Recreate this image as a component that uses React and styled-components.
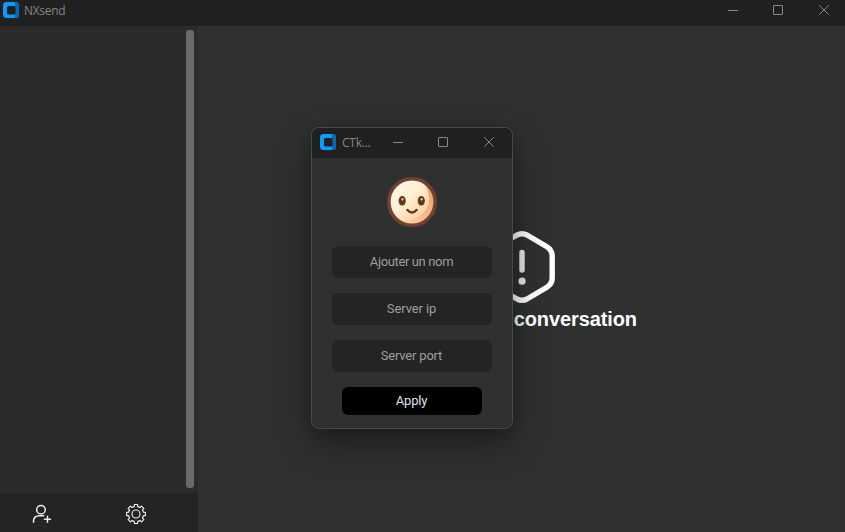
import React from "react";
import styled, { createGlobalStyle } from "styled-components";

const GlobalStyle = createGlobalStyle`
  * { box-sizing: border-box; }
  body { margin: 0; background: #2f3130; overflow: hidden; }
`;

const Window = styled.div`
  position: relative;
  display: flex;
  flex-direction: column;
  width: 845px;
  height: 532px;
  background: #2f3130;
  font-family: Roboto, "Liberation Sans", sans-serif;
`;

const TitleBar = styled.header`
  display: flex;
  flex: none;
  align-items: flex-start;
  height: ${(p) => (p.$dialog ? 30 : 26)}px;
  padding: ${(p) => (p.$dialog ? "6px 0 0 8px" : "2px 0 0 3px")};
  background: #202020;
`;

const Title = styled.span`
  flex: 1;
  margin-left: ${(p) => (p.$dialog ? 6 : 5)}px;
  color: #868686;
  font: 12px/17px "Open Sans", "Noto Sans", sans-serif;
  letter-spacing: ${(p) => (p.$dialog ? -0.25 : -0.3)}px;
  white-space: nowrap;
`;

const Controls = styled.div`
  display: flex;
  gap: 34px;
  padding: ${(p) => (p.$dialog ? "2px 17px 0 0" : "2px 15px 0 0")};
`;

const ControlIcon = styled.svg`
  display: block;
  width: 12px;
  height: 12px;
  overflow: visible;
  fill: none;
  stroke: #8a8a8a;
`;

const Logo = styled.svg`
  display: block;
  flex: none;
  width: 16px;
  height: 16px;
`;

const Content = styled.div`
  display: flex;
  flex: 1;
  min-height: 0;
`;

const Sidebar = styled.aside`
  display: flex;
  flex-direction: column;
  width: 198px;
  background: #2b2b2b;
`;

const ListArea = styled.div`
  display: flex;
  flex: 1;
  justify-content: flex-end;
  padding: 4px 4px 5px 0;
`;

const ScrollThumb = styled.div`
  width: 8px;
  border-radius: 3px;
  background: #696969;
`;

const SidebarFooter = styled.footer`
  display: flex;
  height: 39px;
  padding: 10px 0 0 30px;
  gap: 73px;
  background: #242424;
`;

const ToolIcon = styled.svg`
  display: block;
  width: 22px;
  height: 22px;
  fill: none;
  stroke: #ededed;
  stroke-linecap: round;
  stroke-linejoin: round;
`;

const Main = styled.main`
  display: flex;
  flex: 1;
  flex-direction: column;
  align-items: center;
  padding-top: 203px;
`;

const AlertIcon = styled.svg`
  display: block;
  width: 76px;
  height: 76px;
`;

const EmptyMessage = styled.div`
  margin-top: 2px;
  color: #fff;
  font: bold 20px/24px "Liberation Sans", Arial, sans-serif;
  letter-spacing: -0.1px;
  padding-left: 2px;
`;

const Dialog = styled.section`
  position: absolute;
  top: 127px;
  left: 311px;
  display: flex;
  flex-direction: column;
  width: 202px;
  height: 302px;
  overflow: hidden;
  border: 1px solid #484a49;
  border-radius: 8px;
  background: #2f3130;
  box-shadow: 0 14px 34px rgba(0, 0, 0, 0.42), 0 1px 12px rgba(0, 0, 0, 0.12);
`;

const Form = styled.form`
  display: flex;
  flex-direction: column;
  align-items: center;
  gap: 15px;
  padding-top: 19px;
`;

const Avatar = styled.svg`
  display: block;
  width: 50px;
  height: 50px;
  margin-bottom: 4px;
`;

const Field = styled.input`
  width: 160px;
  height: 32px;
  padding: 0 1px 1px 0;
  border: 0;
  border-radius: 6px;
  background: #242424;
  font: 13px Roboto, sans-serif;
  letter-spacing: ${(p) => p.$tracking}px;
  text-align: center;
  &::placeholder { color: #9e9e9e; opacity: 1; }
`;

const ApplyButton = styled.button`
  width: 140px;
  height: 28px;
  padding: 0 1px 1px 0;
  border: 0;
  border-radius: 6px;
  background: #000;
  color: #dce4ee;
  font: 13px Roboto, sans-serif;
  letter-spacing: -0.2px;
`;

function AppLogo() {
  return (
    <Logo viewBox="0 0 16 16">
      <rect width="16" height="16" rx="3.500" fill="#0a9bff" />
      <path d="M12 0h.5A3.5 3.5 0 0 1 16 3.5v9a3.5 3.5 0 0 1-3.500 3.500H12z" fill="#0867b5" />
      <rect x="4" y="4" width="8.500" height="8.500" rx="1.500" fill="#202020" />
    </Logo>
  );
}

function WindowControls({ dialog }) {
  return (
    <Controls $dialog={dialog}>
      <ControlIcon viewBox="0 0 12 12"><path d="M2 6.500h10" /></ControlIcon>
      <ControlIcon viewBox="0 0 12 12"><rect x="1.500" y="1.500" width="9" height="9" rx=".5" /></ControlIcon>
      <ControlIcon viewBox="0 0 12 12"><path d="m1.200 1.200 9.600 9.600m0-9.600-9.600 9.600" /></ControlIcon>
    </Controls>
  );
}

// Eight flat teeth joined by rounded notches.
function gearPath() {
  const at = (angle, radius) =>
    `${(11 + radius * Math.sin(angle)).toFixed(2)} ${(11 - radius * Math.cos(angle)).toFixed(2)}`;
  const step = Math.PI / 4;
  let path = `M${at(-0.17, 9.6)}`;
  for (let i = 0; i < 8; i += 1) {
    const center = i * step;
    path += `L${at(center + 0.17, 9.6)}L${at(center + 0.21, 8)}`;
    path += `Q${at(center + 0.27, 6.9)} ${at(center + step / 2, 7.9)}`;
    path += `Q${at(center + step - 0.27, 6.9)} ${at(center + step - 0.21, 8)}`;
    path += `L${at(center + step - 0.17, 9.6)}`;
  }
  return `${path}Z`;
}

function Face() {
  return (
    <Avatar viewBox="0 0 50 50">
      <defs>
        <linearGradient id="skin" x1="0.1" y1="0.1" x2="0.85" y2="0.9">
          <stop offset="0" stopColor="#fff9e9" />
          <stop offset=".45" stopColor="#ffedcf" />
          <stop offset="1" stopColor="#ffc995" />
        </linearGradient>
        <linearGradient id="shade" x1="0" y1="1" x2="1" y2="0">
          <stop offset="0" stopColor="#ffd3a7" />
          <stop offset="1" stopColor="#ee9b6b" />
        </linearGradient>
      </defs>
      <circle cx="25" cy="25" r="23.500" fill="url(#skin)" />
      <path d="M36 5C50 24 39 43 16 44c13 8 31-1 31-19C47 15 42 8 36 5z" fill="url(#shade)" />
      <circle cx="25" cy="25" r="23.200" fill="none" stroke="#70422f" strokeWidth="3.600" />
      <ellipse cx="15.200" cy="23.800" rx="3.600" ry="4.800" fill="#64361f" />
      <ellipse cx="34.300" cy="23.800" rx="3.600" ry="4.800" fill="#64361f" />
      <ellipse cx="15.500" cy="22.200" rx="1" ry="1.300" fill="#e5d5c8" />
      <ellipse cx="34.600" cy="22.200" rx="1" ry="1.300" fill="#e5d5c8" />
      <path d="M20.500 33q4.500 5.200 9 0" fill="none" stroke="#64361f" strokeWidth="2.500" strokeLinecap="round" />
    </Avatar>
  );
}

export default function App() {
  return (
    <>
      <GlobalStyle />
      <Window>
        <TitleBar>
          <AppLogo />
          <Title>NXsend</Title>
          <WindowControls />
        </TitleBar>
        <Content>
          <Sidebar>
            <ListArea><ScrollThumb /></ListArea>
            <SidebarFooter>
              <ToolIcon viewBox="0 0 22 22" strokeWidth="1.500">
                <circle cx="11" cy="6.700" r="4.300" />
                <path d="M3.500 19.300v-1c0-4 2.500-5.600 6-5.600h4.300M17.500 13.300v6M14.500 16.300h6" />
              </ToolIcon>
              <ToolIcon viewBox="0 0 22 22" strokeWidth="1.150">
                <path d={gearPath()} />
                <circle cx="11" cy="11" r="4" />
              </ToolIcon>
            </SidebarFooter>
          </Sidebar>
          <Main>
            <AlertIcon viewBox="0 0 76 76" fill="none" stroke="#fff" strokeLinecap="round" strokeLinejoin="round">
              <path d="M33 6Q38 3.500 43 6L62.500 17.500Q68.200 21 68.200 27V49Q68.200 55 62.500 58.500L43 70Q38 72.500 33 70L13.500 58.500Q7.800 55 7.800 49V27Q7.800 21 13.500 17.500Z" strokeWidth="5.400" />
              <path d="M38 23.500v17.500" stroke="#e9e9e9" strokeWidth="5.400" />
              <circle cx="38" cy="52.200" r="3.600" fill="#e9e9e9" stroke="none" />
            </AlertIcon>
            <EmptyMessage>Ouvrir une conversation</EmptyMessage>
          </Main>
        </Content>
        <Dialog>
          <TitleBar $dialog>
            <AppLogo />
            <Title $dialog>CTk...</Title>
            <WindowControls dialog />
          </TitleBar>
          <Form onSubmit={(event) => event.preventDefault()}>
            <Face />
            <Field placeholder="Ajouter un nom" $tracking={-0.37} />
            <Field placeholder="Server ip" $tracking={-0.12} />
            <Field placeholder="Server port" $tracking={-0.2} />
            <ApplyButton>Apply</ApplyButton>
          </Form>
        </Dialog>
      </Window>
    </>
  );
}
